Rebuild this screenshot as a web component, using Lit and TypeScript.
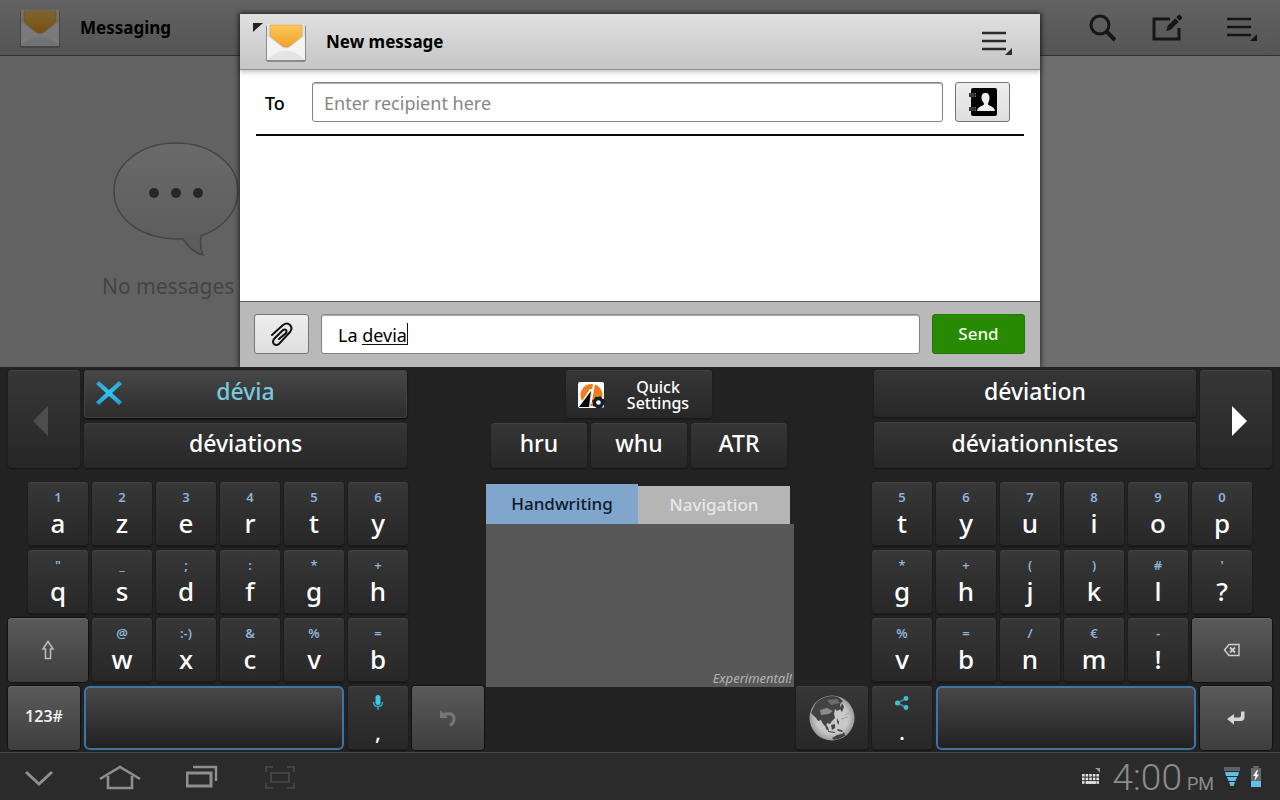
import { LitElement, html, css, svg, nothing } from "lit";
import type { TemplateResult } from "lit";
import { customElement, property } from "lit/decorators.js";
import { classMap } from "lit/directives/class-map.js";

type Key = { main: string; hint?: string; icon?: TemplateResult; label?: string };

const keys = (pairs: string[][]): Key[] => pairs.map(([hint, main]) => ({ hint, main }));

const envelope = html`<svg width="44" height="42" viewBox="0 0 44 42" aria-hidden="true">
  <defs>
    <linearGradient id="flap" x1="0" y1="0" x2="0" y2="1">
      <stop offset="0" stop-color="#fbc95c" /><stop offset="1" stop-color="#f0a026" />
    </linearGradient>
    <linearGradient id="paper" x1="0" y1="0" x2="0" y2="1">
      <stop offset="0" stop-color="#e6e6e6" /><stop offset="1" stop-color="#d4d4d4" />
    </linearGradient>
  </defs>
  <rect x="2" y="4" width="40" height="37" rx="2" fill="#8b8b8b" />
  <rect x="3" y="3" width="38" height="36" rx="1" fill="url(#paper)" />
  <path d="M3 15 L18 26 q4 3 8 0 L41 15 V39 H3z" fill="#f4f4f4" />
  <path d="M3 39 Q22 20 41 39z" fill="#e4e4e4" />
  <path d="M6 4 h32 v11 L27 24 q-2 2 -4 2 h-2 q-2 0 -4 -2 L6 15z" fill="url(#flap)" stroke="#d99a3a" stroke-width="0.6" />
</svg>`;

const menuIcon = html`<svg width="32" height="26" viewBox="0 0 32 26" aria-hidden="true">
  <path d="M1 4h24M1 12h24M1 20h24" stroke="currentColor" stroke-width="2.6" />
  <path d="M31 19v7h-7z" fill="currentColor" />
</svg>`;

const searchIcon = html`<svg width="28" height="28" viewBox="0 0 28 28" fill="none" stroke="currentColor" aria-hidden="true">
  <circle cx="12" cy="11" r="9" stroke-width="3" /><path d="M18 17l9 9" stroke-width="4" />
</svg>`;

const composeIcon = html`<svg width="32" height="28" viewBox="0 0 32 28" fill="none" stroke="currentColor" aria-hidden="true">
  <path d="M20 5H4v20h25V14" stroke-width="3" />
  <path d="M16 17l2-5 2 0 1 2-1 2z" fill="currentColor" stroke="none" />
  <path d="M19 14L27 6" stroke-width="5" /><path d="M28 5l3-3" stroke-width="5" />
</svg>`;

const bubble = html`<svg width="126" height="116" viewBox="0 0 126 116" aria-hidden="true">
  <defs>
    <linearGradient id="bubble" x1="0" y1="0" x2="0" y2="1">
      <stop offset="0" stop-color="#6a6a6a" /><stop offset="1" stop-color="#5b5b5b" />
    </linearGradient>
  </defs>
  <path d="M88 94 C110 86 125 70 125 49 C125 22 98 1 63 1 C28 1 1 22 1 49 C1 77 28 98 70 97 C75 105 82 111 90 113 C87 107 87 101 88 94z"
    fill="url(#bubble)" stroke="#454545" stroke-width="1.5" />
  <g fill="#272727"><circle cx="41" cy="51" r="5" /><circle cx="63" cy="51" r="5" /><circle cx="85" cy="51" r="5" /></g>
</svg>`;

const contactIcon = html`<svg width="30" height="30" viewBox="0 0 30 30" aria-hidden="true">
  <rect x="3" y="1" width="26" height="28" rx="2" fill="#000" />
  <path d="M17.5 6c3 0 4 2 4 5s-1.500 4-1.500 6c0 2 6 1.500 7 7H9c1-5.500 7-5 7-7s-2.500-3-2.500-6 1-5 4-5z" fill="#eee" />
  <g fill="none" stroke="#e6e6e6" stroke-width="4"><path d="M0 8h8M0 22h8" /></g>
  <g fill="none" stroke="#000" stroke-width="1.400"><path d="M1 7h6v2H1M1 21h6v2H1" /></g>
</svg>`;

const clipIcon = html`<svg width="24" height="26" viewBox="0 0 24 26" fill="none" stroke="#111" stroke-width="2" stroke-linecap="round" aria-hidden="true">
  <path d="M2 14L13 4q4-3 7 0t0 7L9 23q-3 2-5 0t0-5L13 9q2-1 3 0t0 3L9 18" />
</svg>`;

const crossIcon = html`<svg width="30" height="26" viewBox="0 0 30 26" aria-hidden="true">
  <defs><linearGradient id="cross" x1="0" y1="0" x2="0" y2="1">
    <stop offset="0" stop-color="#2d9fd0" /><stop offset="0.5" stop-color="#2fc4f5" /><stop offset="1" stop-color="#2a96c8" />
  </linearGradient></defs>
  <path d="M2 4L5 1L15 10L25 1L28 4L18 13L28 22L25 25L15 16L5 25L2 22L12 13z" fill="url(#cross)" />
</svg>`;

const settingsLogo = html`<svg width="28" height="28" viewBox="0 0 28 28" aria-hidden="true">
  <rect x="1" y="1" width="26" height="26" rx="2" fill="#fff" />
  <circle cx="14.500" cy="14" r="11" fill="#ee7d1c" />
  <path d="M1 26L13 8l2 0-2 18z" fill="#fff" /><path d="M2 26L14 10l-2 16z" fill="#050505" />
  <path d="M16 3l2 0-3.500 20h-1.500z" fill="#fff" />
  <circle cx="21.500" cy="21.500" r="4" fill="#fff" stroke="#14202c" stroke-width="3.400" />
  <circle cx="21.500" cy="21.500" r="5.600" fill="none" stroke="#14202c" stroke-width="1.500" stroke-dasharray="2 2.400" />
</svg>`;

const triangle = (dir: "left" | "right") => html`<svg width="16" height="30" viewBox="0 0 16 30" aria-hidden="true">
  <path d=${dir === "left" ? "M16 0v30L1 15z" : "M0 0v30L15 15z"} fill="currentColor" />
</svg>`;

const shiftIcon = html`<svg width="14" height="20" viewBox="0 0 14 20" fill="none" stroke="#b9b9b9" stroke-width="1.600" aria-hidden="true">
  <path d="M7 1.500L12 9H9.500v9.500h-5V9H2z" />
</svg>`;

const backspaceIcon = html`<svg width="18" height="14" viewBox="0 0 18 14" fill="none" stroke="#d0d0d0" stroke-width="1.400" aria-hidden="true">
  <path d="M1.500 7L6 1.500h10v11H6z" /><path d="M7 4.500l5 5M12 4.500l-5 5" stroke-width="1.800" />
</svg>`;

const enterIcon = html`<svg width="20" height="16" viewBox="0 0 20 16" aria-hidden="true">
  <path d="M15 1.500h3.500V7q0 4-4 4H8v3.500L1 9l7-5v3.500h5q2 0 2-2z" fill="#d6d6d6" />
</svg>`;

const undoIcon = html`<svg width="20" height="18" viewBox="0 0 20 18" aria-hidden="true">
  <path d="M2 1v8h8z" fill="#777" /><path d="M5 5.500q10-2.500 11 3 .5 5-4 8" fill="none" stroke="#777" stroke-width="3" />
</svg>`;

const micIcon = html`<svg width="12" height="18" viewBox="0 0 12 18" aria-hidden="true">
  <rect x="3.500" y="1" width="5" height="10" rx="2.500" fill="#45c3e6" />
  <path d="M1.500 8q0 4.500 4.500 4.500T10.500 8M6 12v4" fill="none" stroke="#35a5cb" stroke-width="1.500" />
</svg>`;

const shareIcon = html`<svg width="16" height="18" viewBox="0 0 16 18" aria-hidden="true">
  <path d="M13 4L3.500 9l9.500 5" fill="none" stroke="#2b93a8" stroke-width="1.500" />
  <g fill="#3fc0cf"><circle cx="3.500" cy="9" r="2.500" /><circle cx="12" cy="4.500" r="2.400" /><circle cx="12" cy="13.500" r="2.400" /></g>
</svg>`;

const globeIcon = html`<svg width="46" height="46" viewBox="0 0 46 46" aria-hidden="true">
  <defs>
    <radialGradient id="sea" cx="0.5" cy="0.5" r="0.5">
      <stop offset="0.7" stop-color="#c8c8c8" /><stop offset="1" stop-color="#9a9a9a" />
    </radialGradient>
    <clipPath id="disc"><circle cx="23" cy="23" r="22" /></clipPath>
  </defs>
  <circle cx="23" cy="23" r="22.500" fill="url(#sea)" />
  <g clip-path="url(#disc)" fill="#434343">
    <path d="M2 18L7 7l9-6 12 0 6 5-3 3 1 5-4 2-2-2-1 5 1 4-3 3-2 3-3-1-1 4-3-3-2-4-3 1-2-3z" />
    <path d="M16 29l3 3 1 4-3-2zM22 30l4-1v4l-3 2zM19 36l7 1 0 1-7-1zM28 23l2 4 0 3-2-3zM31 14l2-6 2 4-2 5z" />
    <path d="M23 43l5-3 5-1 2-2 1 3 4 0-5 4-8 3zM28 34l5 1 1 2-5-1z" />
    <path d="M11 15l7-2 6 3-4 3-8 1z" fill="#8c8c8c" /><path d="M18 5l10-1 3 4-9 2z" fill="#6b6b6b" />
  </g>
  <path d="M32 24l7-2M36 20l4-2" stroke="#a2a2a2" stroke-width="1" />
</svg>`;

@customElement("kb-key")
class KbKey extends LitElement {
  @property({ attribute: false }) key: Key = { main: "" };
  @property() tone = "dark";

  static styles = css`
    :host { display: flex; }
    button {
      flex: 1; display: flex; flex-direction: column; align-items: center;
      min-width: 0; height: 64px; padding: 6px 0; border: 0; border-radius: 4px;
      background: linear-gradient(#373737, #272727);
      box-shadow: inset 0 1px #434343, inset 0 -1px #1c1c1c, 0 1px 2px #131313;
      color: #fff; font: 26px/34px "Noto Sans", "Open Sans", sans-serif;
    }
    .hint {
      height: 18px; display: flex; align-items: center; white-space: nowrap;
      color: #8bb3dc; font-size: 13px; font-weight: 600; line-height: 18px;
    }
    .main { font-weight: 500; }
    .punct { padding-top: 8px; }
    .punct .main { padding-top: 2px; font-size: 22px; }
    .light, .space, .plain { justify-content: center; padding: 0; }
    .light {
      background: linear-gradient(#5a5a5a, #3e3e3e);
      box-shadow: inset 0 1px #686868, 0 0 1px 1px #111;
    }
    .light .main { padding-bottom: 4px; font-size: 16px; font-weight: 600; line-height: 20px; color: #eee; }
    .space {
      background: linear-gradient(#494949, #202020);
      box-shadow: inset 0 0 0 2px #44729f, 0 0 2px #17324c;
      border-radius: 6px;
    }
  `;

  render() {
    const { main, hint, icon, label } = this.key;
    const big = this.tone !== "dark";
    return html`<button class=${classMap({ [this.tone]: big, punct: !big && !!icon })} aria-label=${label ?? main}>
      ${big
        ? icon ?? (main ? html`<span class="main">${main}</span>` : nothing)
        : html`<span class="hint">${icon ?? hint}</span><span class="main">${main}</span>`}
    </button>`;
  }
}

@customElement("soft-keyboard")
class SoftKeyboard extends LitElement {
  static styles = css`
    :host {
      display: grid; grid-template-columns: 476fr 308fr 476fr; gap: 2px;
      padding: 3px 8px 2px; background: #222;
      font-family: "Noto Sans", "Open Sans", sans-serif; color: #fff;
    }
    .cluster, .centre { display: flex; flex-direction: column; gap: 14px; min-width: 0; }
    .picks { display: flex; gap: 4px; height: 98px; }
    .left .picks { padding-right: 77px; }
    .right .picks { padding-left: 78px; }
    .words { flex: 1; display: flex; flex-direction: column; gap: 5px; min-width: 0; }
    button { font-family: inherit; }
    .pick {
      position: relative; flex: 1; display: flex; align-items: center; justify-content: center;
      padding: 0 0 4px; border: 0; border-radius: 4px;
      background: linear-gradient(#363636, #272727);
      box-shadow: inset 0 1px #404040, 0 1px 2px #131313;
      color: #fff; font-size: 23px; font-weight: 500; line-height: 30px;
    }
    .pick.current {
      padding-bottom: 6px; background: linear-gradient(#484848, #2c2c2c); color: #7ac8dc;
      box-shadow: inset 0 0 0 1px #444, 0 1px 2px #000;
    }
    .pick.current svg { position: absolute; left: 10px; top: 10px; }
    .pick.turn { flex: 0 0 72px; padding-top: 4px; padding-bottom: 0; }
    .turn.off { color: #4d4d4d; padding-right: 8px; }
    .turn.on { padding-left: 8px; }
    .rows { display: flex; flex-direction: column; gap: 4px; }
    .row { display: flex; gap: 4px; }
    .left .row { padding-right: 76px; }
    .right .row { padding-left: 76px; }
    .left .inset { padding-left: 20px; }
    .right .inset { padding-right: 20px; }
    .cluster .full { padding: 0; }
    .k { flex: 60 1 0; }
    .wide { flex: 80 1 0; }
    .mid { flex: 72 1 0; }
    .bar { flex: 260 1 0; }
    .centre .top { display: flex; flex-direction: column; align-items: center; gap: 5px; height: 98px; padding: 0 7px 0 5px; }
    .pick.quick { width: 146px; gap: 22px; padding: 2px 12px 0 0; font-size: 16px; line-height: 16px; }
    .shorts { flex: 1; align-self: stretch; display: flex; gap: 4px; }
    .pad { flex: 1; display: flex; flex-direction: column; padding-top: 2px; padding-bottom: 63px; }
    .tabs { display: flex; align-items: flex-end; padding-right: 4px; }
    .tab {
      flex: 1; height: 38px; border: 0; padding: 0; background: #b5b5b5; color: #e8e8e8;
      font-size: 17px; line-height: 24px; font-weight: 500;
    }
    .tab.active { height: 40px; background: #81a6ce; color: #0d1a2a; }
    .sheet {
      flex: 1; display: flex; align-items: flex-end; justify-content: flex-end; padding-right: 2px; background: #585858;
      color: #b4b4b4; font-size: 13px; line-height: 17px; font-style: italic;
    }
  `;

  private row(list: Key[]) {
    return list.map((key) => html`<kb-key class="k" .key=${key}></kb-key>`);
  }

  render() {
    return html`
      <section class="cluster left">
        <div class="picks">
          <button class="pick turn off" aria-label="Previous" disabled>${triangle("left")}</button>
          <div class="words">
            <button class="pick current">${crossIcon}dévia</button>
            <button class="pick">déviations</button>
          </div>
        </div>
        <div class="rows">
          <div class="row inset">${this.row(keys([["1", "a"], ["2", "z"], ["3", "e"], ["4", "r"], ["5", "t"], ["6", "y"]]))}</div>
          <div class="row inset">${this.row(keys([['"', "q"], ["_", "s"], [";", "d"], [":", "f"], ["*", "g"], ["+", "h"]]))}</div>
          <div class="row">
            <kb-key class="wide" tone="light" .key=${{ main: "", icon: shiftIcon, label: "Shift" }}></kb-key>
            ${this.row(keys([["@", "w"], [":-)", "x"], ["&", "c"], ["%", "v"], ["=", "b"]]))}
          </div>
          <div class="row full">
            <kb-key class="mid" tone="light" .key=${{ main: "123#" }}></kb-key>
            <kb-key class="bar" tone="space" .key=${{ main: "", label: "Space" }}></kb-key>
            ${this.row([{ main: ",", icon: micIcon }])}
            <kb-key class="mid" tone="light" .key=${{ main: "", icon: undoIcon, label: "Undo" }}></kb-key>
          </div>
        </div>
      </section>

      <section class="centre">
        <div class="top">
          <button class="pick quick">${settingsLogo}<span>Quick<br />Settings</span></button>
          <div class="shorts">
            <button class="pick">hru</button><button class="pick">whu</button><button class="pick">ATR</button>
          </div>
        </div>
        <div class="pad">
          <div class="tabs" role="tablist">
            <button class="tab active" role="tab" aria-selected="true">Handwriting</button>
            <button class="tab" role="tab" aria-selected="false">Navigation</button>
          </div>
          <div class="sheet">Experimental!</div>
        </div>
      </section>

      <section class="cluster right">
        <div class="picks">
          <div class="words">
            <button class="pick">déviation</button>
            <button class="pick">déviationnistes</button>
          </div>
          <button class="pick turn on" aria-label="Next">${triangle("right")}</button>
        </div>
        <div class="rows">
          <div class="row inset">${this.row(keys([["5", "t"], ["6", "y"], ["7", "u"], ["8", "i"], ["9", "o"], ["0", "p"]]))}</div>
          <div class="row inset">${this.row(keys([["*", "g"], ["+", "h"], ["(", "j"], [")", "k"], ["#", "l"], ["'", "?"]]))}</div>
          <div class="row">
            ${this.row(keys([["%", "v"], ["=", "b"], ["/", "n"], ["€", "m"], ["-", "!"]]))}
            <kb-key class="wide" tone="light" .key=${{ main: "", icon: backspaceIcon, label: "Backspace" }}></kb-key>
          </div>
          <div class="row full">
            <kb-key class="mid" tone="plain" .key=${{ main: "", icon: globeIcon, label: "Language" }}></kb-key>
            ${this.row([{ main: ".", icon: shareIcon }])}
            <kb-key class="bar" tone="space" .key=${{ main: "", label: "Space" }}></kb-key>
            <kb-key class="mid" tone="light" .key=${{ main: "", icon: enterIcon, label: "Enter" }}></kb-key>
          </div>
        </div>
      </section>
    `;
  }
}

@customElement("system-bar")
class SystemBar extends LitElement {
  static styles = css`
    :host {
      display: flex; align-items: center; justify-content: space-between;
      box-sizing: border-box; height: 48px; padding: 0 18px 0 24px;
      background: #2b2b2b; border-top: 1px solid #484848;
      font-family: Roboto, "Noto Sans", sans-serif; color: #8c8c8c;
    }
    nav { display: flex; align-items: center; gap: 45px; }
    button { display: flex; padding: 0; border: 0; background: none; color: #8f8f8f; }
    .dim { color: #4a4a4a; }
    .status { display: flex; align-items: center; gap: 10px; }
    time {
      display: flex; align-items: baseline; gap: 5px; padding-top: 8px; padding-left: 2px;
      font-size: 37px; font-weight: 300; line-height: 38px;
    }
    small { font-size: 18px; font-weight: 400; }
  `;

  render() {
    return html`
      <nav>
        <button aria-label="Hide keyboard"><svg width="30" height="28" viewBox="0 0 30 28" fill="none" stroke="currentColor" stroke-width="3"><path d="M2 9l13 12L28 9" /></svg></button>
        <button aria-label="Home"><svg width="42" height="28" viewBox="0 0 42 28" fill="none" stroke="currentColor" stroke-width="2.600"><path d="M1 16L21 4l20 12" /><path d="M9 13v12h24V13" /></svg></button>
        <button aria-label="Recent apps"><svg width="34" height="28" viewBox="7 0 34 28" fill="none" stroke="currentColor"><path d="M8 10h24v13H8z" stroke-width="3" /><path d="M14 4h23v14" stroke-width="2.400" /></svg></button>
        <button class="dim" aria-label="Screenshot"><svg width="32" height="28" viewBox="7 0 32 28" fill="none" stroke="currentColor" stroke-width="1.600"><path d="M8 9V4h7M29 4h7v5M8 20v5h7M29 25h7v-5" /><path d="M13 10h18v9H13z" /></svg></button>
      </nav>
      <div class="status">
        <svg width="20" height="20" viewBox="0 0 20 20" aria-hidden="true">
          <g fill="#e0e0e0">
            ${[0, 1, 2].map((r) => [0, 1, 2, 3, 4].map((c) =>
              svg`<rect x=${1 + c * 3.6} y=${7 + r * 3.6} width="2.600" height="2.600" />`))}
            <rect x="5" y="14.200" width="10" height="2.600" />
            <path d="M19 1v5l-2-2.500L14 1z" fill="#9a9a9a" />
          </g>
        </svg>
        <time datetime="16:00">4:00<small>PM</small></time>
        <svg width="16" height="20" viewBox="0 0 16 20" aria-hidden="true">
          <path d="M0 0h16v4H0z" fill="#5c6266" />
          <path d="M1 5h14l-1 4H2zM3 10h10l-1.500 4h-7zM5 15h6l-1.500 4h-3z" fill="#5fbde6" />
        </svg>
        <svg width="12" height="22" viewBox="0 0 12 22" aria-hidden="true">
          <path d="M3.500 0h5v2H11v14H1V2h2.500z" fill="#65696c" /><path d="M1 15h10v6H1z" fill="#5fbde6" />
          <path d="M7 4L3 10h2.500L4.500 15 9 8.500H6.500L8 4z" fill="#fff" />
        </svg>
      </div>
    `;
  }
}

@customElement("app-root")
class AppRoot extends LitElement {
  static styles = css`
    :host {
      display: flex; flex-direction: column; min-height: 100vh;
      font-family: "Noto Sans", "Open Sans", sans-serif; color: #000;
    }
    h1, p { margin: 0; }
    .stage { flex: 1; display: grid; grid-template: minmax(0, 1fr) / minmax(0, 1fr); overflow: hidden; }
    .stage > * { grid-area: 1 / 1; }
    .app { display: flex; flex-direction: column; background: #6e6e6e; }
    .app > header {
      display: flex; align-items: center; height: 55px; padding: 0 22px 0 18px;
      background: linear-gradient(#626262, #555); border-bottom: 1px solid #303030;
    }
    h1 { font-size: 17px; line-height: 24px; font-weight: 700; }
    header h1 { flex: 1; padding-left: 18px; padding-top: 1px; }
    .dimmed { display: flex; filter: brightness(0.5); }
    header button { display: flex; padding: 0; border: 0; background: none; color: #2a2a2a; }
    .app header button { color: #161616; }
    .actions { display: flex; align-items: center; gap: 34px; }
    .actions .more { padding-left: 10px; }
    .empty {
      flex: 1; box-sizing: border-box; width: 30%; padding: 86px 0 0 102px; background: #626262;
      color: #444; font-size: 21px; line-height: 28px;
    }
    .empty svg { display: block; margin: 0 0 14px 11px; }
    .dialog {
      justify-self: center; display: flex; flex-direction: column; width: 62.5%; margin-top: 14px;
      background: #fff; box-shadow: 0 0 5px 1px rgba(0, 0, 0, 0.65);
    }
    .dialog > header {
      display: flex; align-items: center; height: 55px; padding: 0 27px 0 12px;
      background: linear-gradient(#e0e0e0, #c6c6c6); border-bottom: 1px solid #8d8d8d;
      box-shadow: 0 2px 5px rgba(0, 0, 0, 0.25);
    }
    .corner { align-self: flex-start; padding-top: 8px; }
    .corner svg { display: block; }
    .to {
      display: flex; align-items: center; gap: 12px; margin: 0 16px; padding: 12px 14px 12px 9px;
      border-bottom: 2px solid #0a0a0a;
    }
    .to label { flex: 0 0 35px; padding-top: 2px; font-size: 18px; line-height: 24px; font-weight: 500; }
    input {
      box-sizing: border-box; width: 100%; height: 40px; min-width: 0; margin: 0; padding: 2px 11px 0; outline: 0;
      border: 1px solid #858585; border-radius: 3px; background: #fff; color: #000;
      box-shadow: inset 0 1px 1px #aaa;
      font: 18px/24px "Noto Sans", "Open Sans", sans-serif;
    }
    input::placeholder { color: #868686; opacity: 1; }
    .to input { flex: 1; }
    .square {
      flex: 0 0 55px; display: flex; align-items: center; justify-content: center; height: 40px; padding: 0;
      border: 1px solid #757575; border-radius: 3px; background: linear-gradient(#eee, #dedede);
    }
    .thread { flex: 1; }
    .compose {
      display: flex; gap: 12px; padding: 12px 15px 13px 14px;
      background: #b9b9b9; border-top: 1px solid #5c5c5c;
    }
    .field { position: relative; flex: 1; }
    .field input { padding-left: 16px; }
    .word {
      position: absolute; left: 41px; top: 9px; width: 45px; height: 21px;
      border: solid #111; border-width: 0 1px 1px 0; pointer-events: none;
    }
    .send {
      flex: 0 0 93px; height: 40px; padding: 0; border: 1px solid #1f7a0a; border-radius: 3px;
      background: #278a02; color: #f2fbee;
      font: 500 17px/24px "Noto Sans", "Open Sans", sans-serif;
    }
  `;

  render() {
    return html`
      <div class="stage">
        <main class="app">
          <header>
            <span class="dimmed">${envelope}</span>
            <h1>Messaging</h1>
            <div class="actions">
              <button aria-label="Search">${searchIcon}</button>
              <button aria-label="New message">${composeIcon}</button>
              <button class="more" aria-label="Menu">${menuIcon}</button>
            </div>
          </header>
          <section class="empty">${bubble}<p>No messages</p></section>
        </main>
        <section class="dialog" role="dialog" aria-labelledby="title">
          <header>
            <span class="corner"><svg width="12" height="10" viewBox="0 0 12 10" aria-hidden="true"><path d="M1 1h10L1 10z" fill="#222" /></svg></span>
            ${envelope}
            <h1 id="title">New message</h1>
            <button aria-label="Menu">${menuIcon}</button>
          </header>
          <div class="to">
            <label for="to">To</label>
            <input id="to" type="text" placeholder="Enter recipient here" />
            <button class="square" aria-label="Contacts">${contactIcon}</button>
          </div>
          <div class="thread"></div>
          <div class="compose">
            <button class="square" aria-label="Attach">${clipIcon}</button>
            <div class="field">
              <input type="text" aria-label="Message" value="La devia" />
              <span class="word"></span>
            </div>
            <button class="send">Send</button>
          </div>
        </section>
      </div>
      <soft-keyboard></soft-keyboard>
      <system-bar></system-bar>
    `;
  }
}
